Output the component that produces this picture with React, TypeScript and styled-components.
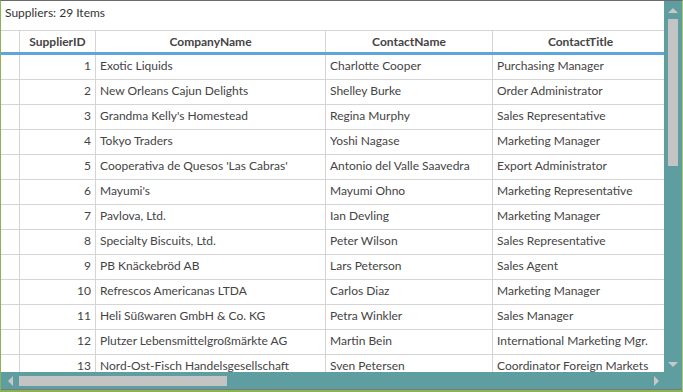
import styled, { createGlobalStyle } from "styled-components";

const GlobalStyle = createGlobalStyle`
  html, body {
    margin: 0;
    padding: 0;
    background: #ffffff;
  }
  body {
    font-family: "Segoe UI", Lato, "Open Sans", sans-serif;
  }
`;

type Supplier = {
  id: number;
  company: string;
  contact: string;
  title: string;
};

const suppliers: Supplier[] = [
  { id: 1, company: "Exotic Liquids", contact: "Charlotte Cooper", title: "Purchasing Manager" },
  { id: 2, company: "New Orleans Cajun Delights", contact: "Shelley Burke", title: "Order Administrator" },
  { id: 3, company: "Grandma Kelly's Homestead", contact: "Regina Murphy", title: "Sales Representative" },
  { id: 4, company: "Tokyo Traders", contact: "Yoshi Nagase", title: "Marketing Manager" },
  { id: 5, company: "Cooperativa de Quesos 'Las Cabras'", contact: "Antonio del Valle Saavedra", title: "Export Administrator" },
  { id: 6, company: "Mayumi's", contact: "Mayumi Ohno", title: "Marketing Representative" },
  { id: 7, company: "Pavlova, Ltd.", contact: "Ian Devling", title: "Marketing Manager" },
  { id: 8, company: "Specialty Biscuits, Ltd.", contact: "Peter Wilson", title: "Sales Representative" },
  { id: 9, company: "PB Knäckebröd AB", contact: "Lars Peterson", title: "Sales Agent" },
  { id: 10, company: "Refrescos Americanas LTDA", contact: "Carlos Diaz", title: "Marketing Manager" },
  { id: 11, company: "Heli Süßwaren GmbH & Co. KG", contact: "Petra Winkler", title: "Sales Manager" },
  { id: 12, company: "Plutzer Lebensmittelgroßmärkte AG", contact: "Martin Bein", title: "International Marketing Mgr." },
  { id: 13, company: "Nord-Ost-Fisch Handelsgesellschaft", contact: "Sven Petersen", title: "Coordinator Foreign Markets" },
];

const COLS = "19px 76px 230px 167px 176px";

const Frame = styled.div`
  width: 683px;
  height: 392px;
  box-sizing: border-box;
  border-top: 1px solid #6b6b6b;
  border-left: 1px solid #8db255;
  border-right: 1px solid #a9c878;
  border-bottom: 2px solid #8db255;
  display: flex;
  flex-direction: column;
  overflow: hidden;
`;

const Body = styled.div`
  flex: 1;
  display: flex;
  min-height: 0;
`;

const Main = styled.div`
  flex: 1;
  min-width: 0;
  overflow: hidden;
  display: flex;
  flex-direction: column;
`;

const Caption = styled.div`
  height: 29px;
  flex-shrink: 0;
  display: flex;
  align-items: center;
  padding-left: 4px;
  padding-bottom: 7px;
  box-sizing: border-box;
  font-size: 12px;
  color: #333;
`;

const Row = styled.div<{ $header?: boolean }>`
  display: grid;
  grid-template-columns: ${COLS};
  width: max-content;
  flex-shrink: 0;
  height: ${(p) => (p.$header ? "21px" : "24px")};
  border-bottom: ${(p) => (p.$header ? "3px solid #5ea6d9" : "1px solid #d5d5d5")};
  border-top: ${(p) => (p.$header ? "1px solid #d5d5d5" : "none")};
  box-sizing: content-box;
`;

const Cell = styled.div<{ $align?: "left" | "right" | "center"; $bold?: boolean }>`
  display: flex;
  align-items: center;
  justify-content: ${(p) =>
    p.$align === "right" ? "flex-end" : p.$align === "center" ? "center" : "flex-start"};
  padding: 0 4px ${(p) => (p.$bold ? "0" : "3px")};
  border-right: 1px solid #d5d5d5;
  font-size: 12px;
  font-weight: ${(p) => (p.$bold ? 700 : 400)};
  color: #444;
  white-space: nowrap;
  overflow: hidden;
  box-sizing: border-box;
`;

const VScroll = styled.div`
  width: 18px;
  flex-shrink: 0;
  background: #5f9ea0;
  display: flex;
  flex-direction: column;
  align-items: center;
`;

const HScroll = styled.div`
  height: 17px;
  flex-shrink: 0;
  background: #5f9ea0;
  display: flex;
  align-items: center;
  border-bottom: 1px solid #7a7a7a;
`;

const Arrow = styled.div<{ $size: number; $vertical?: boolean }>`
  display: flex;
  align-items: center;
  justify-content: center;
  flex-shrink: 0;
  ${(p) => (p.$vertical ? `height: ${p.$size}px;` : `width: ${p.$size}px;`)}
`;

const VThumb = styled.div`
  width: 10px;
  height: 147px;
  background: #c4c4c4;
`;

const HThumb = styled.div`
  width: 208px;
  height: 10px;
  background: #c4c4c4;
`;

const Spacer = styled.div`
  flex: 1;
`;

const Tri = ({ dir }: { dir: "up" | "down" | "left" | "right" }) => {
  const pts = {
    up: "0,5 5,0 10,5",
    down: "0,0 10,0 5,5",
    left: "5,0 5,10 0,5",
    right: "0,0 0,10 5,5",
  }[dir];
  const vertical = dir === "up" || dir === "down";
  return (
    <svg width={vertical ? 10 : 5} height={vertical ? 5 : 10}>
      <polygon points={pts} fill="#c8c8c8" />
    </svg>
  );
};

export default function App() {
  return (
    <>
      <GlobalStyle />
      <Frame>
        <Body>
          <Main>
            <Caption>Suppliers: 29 Items</Caption>
            <Row $header>
              <Cell $bold />
              <Cell $align="center" $bold>SupplierID</Cell>
              <Cell $align="center" $bold>CompanyName</Cell>
              <Cell $align="center" $bold>ContactName</Cell>
              <Cell $align="center" $bold>ContactTitle</Cell>
            </Row>
            {suppliers.map((s) => (
              <Row key={s.id}>
                <Cell />
                <Cell $align="right">{s.id}</Cell>
                <Cell>{s.company}</Cell>
                <Cell>{s.contact}</Cell>
                <Cell>{s.title}</Cell>
              </Row>
            ))}
          </Main>
          <VScroll>
            <Arrow $vertical $size={18}>
              <Tri dir="up" />
            </Arrow>
            <VThumb />
            <Spacer />
            <Arrow $vertical $size={16}>
              <Tri dir="down" />
            </Arrow>
          </VScroll>
        </Body>
        <HScroll>
          <Arrow $size={18}>
            <Tri dir="left" />
          </Arrow>
          <HThumb />
          <Spacer />
          <Arrow $size={16}>
            <Tri dir="right" />
          </Arrow>
          <Arrow $size={18} />
        </HScroll>
      </Frame>
    </>
  );
}
